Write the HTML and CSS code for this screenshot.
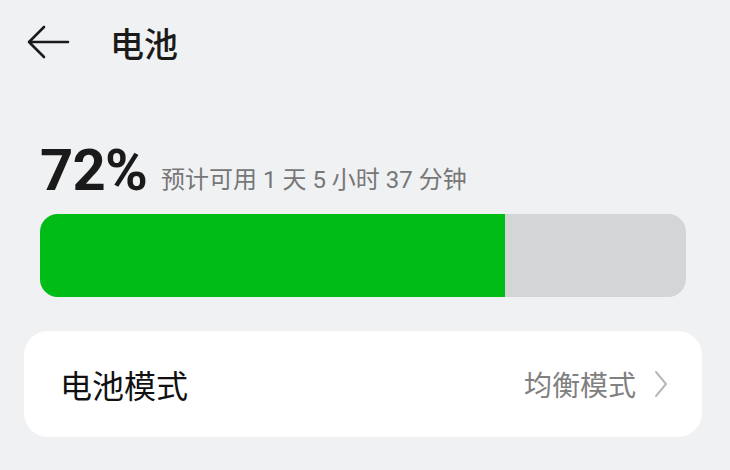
FILE: index.html
```html
<!DOCTYPE html>
<html lang="zh-CN">
<head>
  <meta charset="UTF-8">
  <title>电池</title>
  <meta name="viewport" content="width=device-width, initial-scale=1.0"/>
  <link rel="stylesheet" href="styles.css">
</head>
<body>
  <header class="topbar">
    <svg class="back" width="44" height="36" viewBox="0 0 44 36">
      <path d="M42 18H3M18 3L3 18l15 15" fill="none" stroke="#1a1a1a" stroke-width="2.6" stroke-linecap="round" stroke-linejoin="round"/>
    </svg>
    <h1>电池</h1>
  </header>

  <section class="level">
    <div class="level-row">
      <span class="percent">72%</span>
      <span class="remain">预计可用 1 天 5 小时 37 分钟</span>
    </div>
    <div class="bar">
      <div class="bar-fill" style="width:72%"></div>
    </div>
  </section>

  <div class="card">
    <span class="card-title">电池模式</span>
    <span class="card-value">均衡模式</span>
    <svg class="chevron" width="14" height="28" viewBox="0 0 14 28">
      <path d="M2 2l10 12L2 26" fill="none" stroke="#b8b8b8" stroke-width="2" stroke-linecap="round" stroke-linejoin="round"/>
    </svg>
  </div>
</body>
</html>
```

FILE: styles.css
```css
body {
  margin: 0;
  background-color: #f0f1f3;
  color: #1a1a1a;
  font-family: Roboto, "Noto Sans CJK SC", sans-serif;
  width: 730px;
  height: 470px;
  overflow: hidden;
}
.topbar {
  display: flex;
  align-items: center;
  height: 84px;
  padding-left: 26px;
}
.back {
  display: block;
}
.topbar h1 {
  margin: 0 0 0 40px;
  font-size: 34px;
  font-weight: 500;
  font-family: "Noto Sans CJK SC", sans-serif;
}
.level {
  padding: 52px 44px 0 40px;
}
.level-row {
  display: flex;
  align-items: baseline;
  height: 62px;
}
.percent {
  font-size: 58px;
  font-weight: 700;
  letter-spacing: -0.8px;
}
.remain {
  margin-left: 14px;
  font-size: 24px;
  color: #777;
  position: relative;
  top: -2px;
}
.bar {
  margin-top: 16px;
  height: 83px;
  border-radius: 18px;
  background-color: #d4d5d7;
  overflow: hidden;
}
.bar-fill {
  height: 100%;
  background-color: #00bc16;
}
.card {
  margin: 34px 28px 0 24px;
  height: 106px;
  border-radius: 24px;
  background-color: #fff;
  display: flex;
  align-items: center;
  padding: 0 34px 0 36px;
  font-family: "Noto Sans CJK SC", sans-serif;
}
.card-title {
  flex: 1;
  font-size: 32px;
  color: #111;
}
.card-value {
  font-size: 28px;
  color: #808080;
  margin-right: 18px;
}
.chevron {
  display: block;
}
```
